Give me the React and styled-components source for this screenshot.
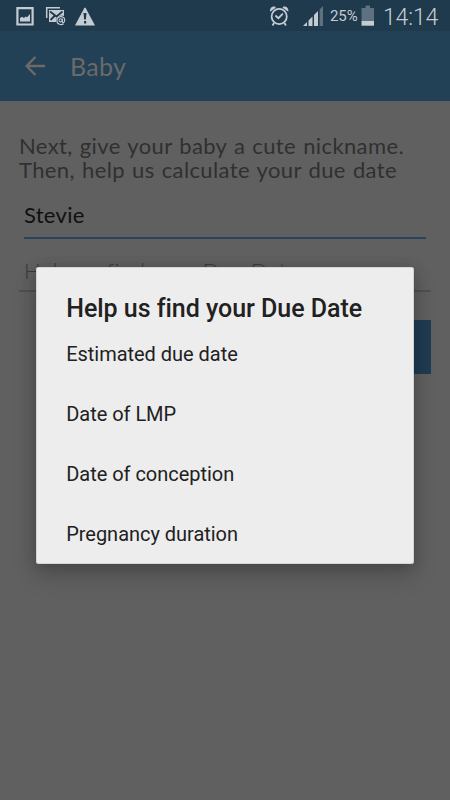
import React from "react";
import styled, { createGlobalStyle } from "styled-components";

const GlobalStyle = createGlobalStyle`
  * { box-sizing: border-box; }
  body { margin: 0; background: #606060; }
`;

const Screen = styled.div`
  position: relative;
  width: 450px;
  height: 800px;
  overflow: hidden;
  background: #606060;
  font-family: Lato, sans-serif;
`;

const StatusBar = styled.header`
  display: flex;
  align-items: flex-start;
  justify-content: space-between;
  height: 31px;
  background: #1f394d;
  color: #c3ccd3;
  font-family: Roboto, sans-serif;
`;

const StatusGroup = styled.div`
  display: flex;
  height: 31px;
`;

const StatusIcon = styled.svg`
  display: block;
  flex: none;
`;

const Percent = styled.span`
  width: 31px;
  padding-top: 1px;
  font-size: 15px;
  line-height: 31px;
  letter-spacing: -0.1px;
  white-space: nowrap;
`;

const Clock = styled.span`
  width: 67px;
  padding-top: 2px;
  font-size: 23px;
  font-weight: 300;
  line-height: 31px;
  letter-spacing: -0.15px;
  white-space: nowrap;
`;

const AppBar = styled.nav`
  display: flex;
  align-items: center;
  gap: 25px;
  height: 70px;
  padding-left: 25px;
  background: #224157;
  color: #6b6a69;
`;

const Title = styled.h1`
  margin: 0;
  font-size: 25px;
  font-weight: 400;
  line-height: 30px;
  letter-spacing: 0.3px;
`;

const Content = styled.main`
  display: flex;
  flex-direction: column;
  padding: 33px 19px 0;
`;

const Intro = styled.p`
  margin: 0;
  height: 48px;
  font-size: 22px;
  line-height: 24px;
  letter-spacing: 0.38px;
  word-spacing: 1.1px;
  color: #303030;
  white-space: nowrap;
`;

const Field = styled.div`
  height: ${(p) => p.$height};
  margin: ${(p) => p.$margin};
  padding: ${(p) => p.$padding};
  border-bottom: 2px solid ${(p) => p.$line};
  color: ${(p) => p.$color};
  font-size: 22px;
  font-weight: ${(p) => p.$weight || 400};
  line-height: 26px;
  letter-spacing: ${(p) => p.$spacing};
  white-space: nowrap;
`;

const SubmitButton = styled.button`
  align-self: flex-end;
  width: 200px;
  height: 54px;
  margin: 28px 0 0;
  border: 0;
  background: #1f3c51;
`;

const DialogLayer = styled.div`
  position: absolute;
  inset: 0;
  padding: 267px 36px 0;
`;

const Dialog = styled.section`
  height: 297px;
  padding: 26px 30px 0 30.2px;
  border-radius: 3px;
  background: #ededed;
  box-shadow: 0 12px 24px rgba(0, 0, 0, 0.16), 0 2px 16px rgba(0, 0, 0, 0.2), inset 0 0 0 0.6px #c0c0c0;
  color: #212121;
  font-family: Roboto, sans-serif;
`;

const DialogTitle = styled.h2`
  margin: 0;
  font-size: 25px;
  font-weight: 500;
  line-height: 31px;
  letter-spacing: -0.03px;
  white-space: nowrap;
`;

const Options = styled.ul`
  margin: 0;
  padding: 0;
  list-style: none;
`;

const Option = styled.li`
  display: flex;
  align-items: center;
  height: 60px;
  font-size: 20px;
  letter-spacing: -0.03px;
  white-space: nowrap;
`;

const options = ["Estimated due date", "Date of LMP", "Date of conception", "Pregnancy duration"];

const Notifications = () => (
  <StatusIcon width="100" height="31" viewBox="0 0 100 31">
    <path fill="#c3ccd3" fillRule="evenodd" d="M16.3 7h17.4v18.6H16.3zM18.5 9.2v14.2h13V9.2z" />
    <path fill="#c3ccd3" d="M20 21.5V18l2-1.2 2 1.2 1.5-1.5 1.5.8 3-3.3v7.5z" />
    <path fill="none" stroke="#c3ccd3" strokeWidth="1.5" d="M46.7 18V7.8H60" />
    <path fill="#c3ccd3" d="M49 10h15v6c-5-1-8 1-8 6h-7z" />
    <path fill="none" stroke="#1f394d" strokeWidth="1.8" d="M50 11.5l6.5 5 6-5M50.5 20l4-4" />
    <path fill="none" stroke="#c3ccd3" strokeWidth="1.2" d="M63.5 23.8c-2 1.6-6.6.7-6.6-3.3 0-5.2 7.8-5.2 7.8-.5 0 3.4-2.7 3-2.4 1.2v-2.5" />
    <circle cx="60.7" cy="20.3" r="1.6" fill="none" stroke="#c3ccd3" strokeWidth="1.1" />
    <path fill="#c3ccd3" d="M84.2 8.2q.8-1.2 1.6 0L95 25.4H75z" />
    <path fill="#1f394d" d="M83.5 13h3l-.6 6.5h-1.8zM84 21h2.2v2.4H84z" />
  </StatusIcon>
);

const AlarmAndSignal = () => (
  <StatusIcon width="61" height="31" viewBox="269 0 61 31">
    <circle cx="279.2" cy="16.5" r="7.6" fill="none" stroke="#c3ccd3" strokeWidth="1.8" />
    <path fill="#c3ccd3" d="M270 11.8c-.3-3.5 1.6-5.8 5-5.3l.8 1.2zM288.4 11.8c.3-3.5-1.6-5.8-5-5.3l-.8 1.2z" />
    <path fill="none" stroke="#c3ccd3" strokeWidth="1.8" d="M275.4 15.5l3 2.7 4.5-4.5M274 23l-1.5 2.5M284.4 23l1.5 2.5" />
    <path fill="#c3ccd3" d="M303 26l4-4v4zM308.5 20.5l4-4V26h-4zM314 15l4-4v15h-4z" />
    <path fill="#5d7180" d="M319.6 9.5l3.4-3.5v20h-3.4z" />
  </StatusIcon>
);

const Battery = () => (
  <StatusIcon width="22" height="31" viewBox="361 0 22 31">
    <path fill="#5d7180" d="M361.5 8h4V5.5h4.5V8h4v13h-12.5z" />
    <path fill="#c3ccd3" d="M361.5 21H374v4.7h-12.5z" />
  </StatusIcon>
);

export default function App() {
  return (
    <>
      <GlobalStyle />
      <Screen>
        <StatusBar>
          <Notifications />
          <StatusGroup>
            <AlarmAndSignal />
            <Percent>25%</Percent>
            <Battery />
            <Clock>14:14</Clock>
          </StatusGroup>
        </StatusBar>
        <AppBar>
          <StatusIcon width="20" height="20" viewBox="0 0 20 20">
            <path fill="none" stroke="#6b6a69" strokeWidth="2.4" d="M20 10H2M10.4 1L1.6 10l8.8 9" />
          </StatusIcon>
          <Title>Baby</Title>
        </AppBar>
        <Content>
          <Intro>
            Next, give your baby a cute nickname.
            <br />
            Then, help us calculate your due date
          </Intro>
          <Field $height="37px" $margin="20px 5px 0" $padding="0" $line="#29435a" $color="#101010" $spacing="0.3px">
            Stevie
          </Field>
          <Field $height="36px" $margin="17px 0 0" $padding="2px 5px 0" $line="#505050" $color="#3a3a3a" $weight={300} $spacing="0.55px">
            Help us find your Due Date
          </Field>
          <SubmitButton aria-label="Continue" />
        </Content>
        <DialogLayer>
          <Dialog role="dialog">
            <DialogTitle>Help us find your Due Date</DialogTitle>
            <Options>
              {options.map((label) => (
                <Option key={label}>{label}</Option>
              ))}
            </Options>
          </Dialog>
        </DialogLayer>
      </Screen>
    </>
  );
}
